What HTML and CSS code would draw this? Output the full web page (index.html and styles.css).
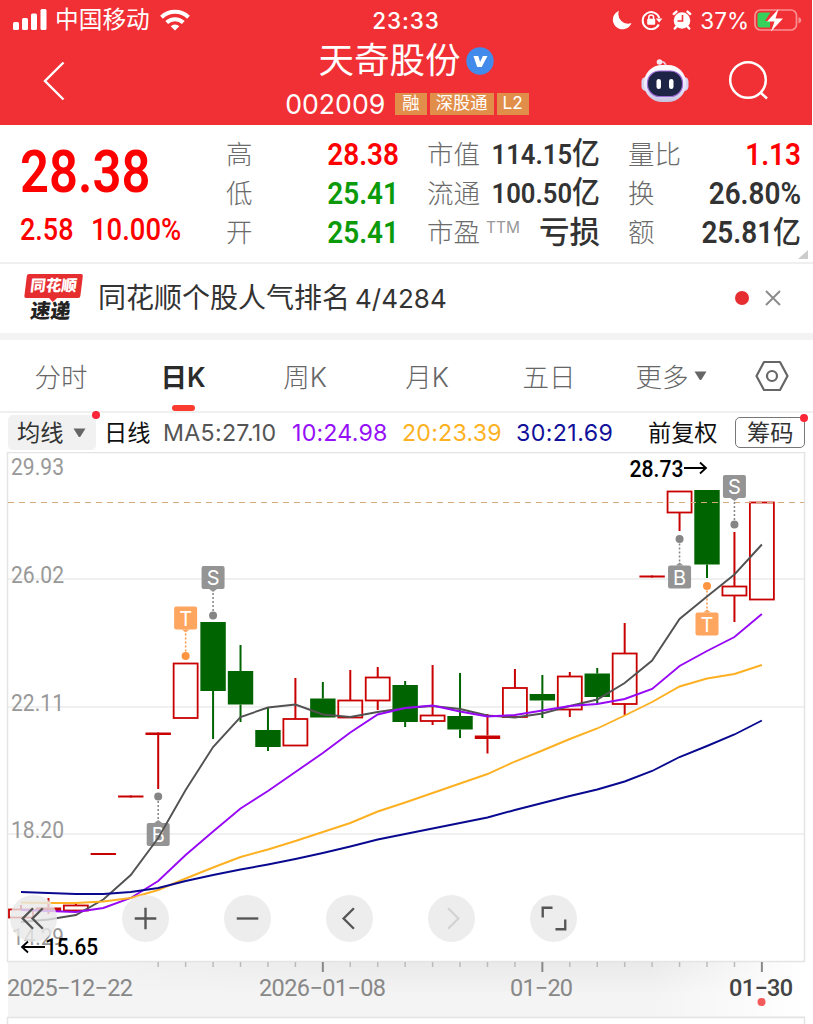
FILE: index.html
```html
<!DOCTYPE html>
<html lang="zh-CN">
  <head>
    <meta charset="UTF-8">
    <meta name="viewport" content="width=device-width, initial-scale=1.0">
    <link rel="stylesheet" href="styles.css">
    <title>天奇股份 002009</title>
  </head>
  <body>
    <header class="header">
      <div class="status">
        <div class="status-left">
          <svg width="34" height="22" viewBox="0 0 34 22" fill="#fff">
            <rect x="0" y="13" width="6" height="8" rx="1.5"/>
            <rect x="9" y="9" width="6" height="12" rx="1.5"/>
            <rect x="18" y="4.500" width="6" height="16.500" rx="1.5"/>
            <rect x="27.500" y="0" width="6" height="21" rx="1.5"/>
          </svg>
          <span class="carrier">中国移动</span>
          <svg width="30" height="22" viewBox="0 0 30 22" fill="none" stroke="#fff" stroke-width="4">
            <path d="M1.500 8.300a19.500 19.500 0 0 1 27 0"/>
            <path d="M6.700 13.500a12 12 0 0 1 16.600 0"/>
            <path d="M15 21.500l-4.300-4.300a6.300 6.300 0 0 1 8.600 0z" fill="#fff" stroke="none"/>
          </svg>
        </div>
        <span class="time">23:33</span>
        <div class="status-right">
          <svg class="moon" width="20" height="20" viewBox="0 0 20 20"><path d="M7 .8A9.600 9.600 0 1 0 19.500 13 9.600 9.600 0 0 1 7 .8z" fill="#fff"/></svg>
          <svg class="lock" width="22" height="20" viewBox="0 0 22 20">
            <path d="M17.800 14.500A8.500 8.500 0 1 1 18.300 8" fill="none" stroke="#fff" stroke-width="2"/>
            <path d="M14.800 8.500h6.600l-3.300 4z" fill="#fff"/>
            <rect x="6.200" y="8.800" width="8" height="6" rx="1" fill="#fff"/>
            <path d="M7.800 9V7.300a2.400 2.400 0 0 1 4.800 0V9" fill="none" stroke="#fff" stroke-width="1.500"/>
          </svg>
          <svg class="alarm" width="20" height="20" viewBox="0 0 20 20">
            <circle cx="10" cy="10.500" r="8.300" fill="#fff"/>
            <path d="M1.800 4L4.500 1.600M18.200 4l-2.700-2.400M4.500 16.500L2.800 18.500M15.500 16.500l1.700 2" stroke="#fff" stroke-width="2.400" stroke-linecap="round"/>
            <path d="M10.500 5v6H5.500" fill="none" stroke="#f03035" stroke-width="1.600"/>
          </svg>
          <span class="percent">37%</span>
          <svg class="battery" width="48" height="24" viewBox="0 0 48 24">
            <rect x="1" y="2" width="41.500" height="20" rx="5.500" fill="none" stroke="#f98f91" stroke-width="1.700"/>
            <path d="M44.500 9v6.500q2.800-1 2.800-3.200T44.500 9z" fill="#f98f91"/>
            <path d="M6 4.500h10.500L11 13h5v6.500H6a2.500 2.500 0 0 1-2.500-2.500V7A2.500 2.500 0 0 1 6 4.500z" fill="#35d15a"/>
            <path d="M24.500 1L13 13.500h7.500L17 23.500 29 10.500h-7.500z" fill="#fff"/>
          </svg>
        </div>
      </div>
      <div class="nav">
        <svg class="back" width="24" height="42" viewBox="0 0 24 42"><path d="M21.500 2.500L3 21l18.500 18.500" fill="none" stroke="#fff" stroke-width="2.400"/></svg>
        <div class="stock">
          <div class="name"><span>天奇股份</span>
            <svg width="28" height="28" viewBox="0 0 28 28">
              <circle cx="14" cy="14" r="13.700" fill="#438bea"/>
              <path d="M7.500 9h4.800l1.800 6 2.800-6h4.600l-5.800 11h-4.500z" fill="#fff"/>
            </svg>
          </div>
          <div class="code">002009<i class="tag">融</i><i class="tag">深股通</i><i class="tag">L2</i></div>
        </div>
        <div class="nav-icons">
          <svg width="48" height="46" viewBox="0 0 48 46">
            <defs>
              <linearGradient id="head" x1="0" y1="0" x2="0" y2="1">
                <stop offset="0" stop-color="#fff"/>
                <stop offset=".65" stop-color="#e9e4fa"/>
                <stop offset="1" stop-color="#c5c2e0"/>
              </linearGradient>
            </defs>
            <path d="M18.500 4q6-1.500 6.500 5" fill="none" stroke="#f2cede" stroke-width="1.600"/>
            <circle cx="18.500" cy="4" r="2.800" fill="#f5e9f4"/>
            <rect x=".5" y="19" width="9" height="14" rx="4.500" fill="#d6d4f1"/>
            <rect x="38.500" y="19" width="9" height="14" rx="4.500" fill="#d6d4f1"/>
            <rect x="3" y="7" width="42" height="37" rx="18" fill="url(#head)"/>
            <rect x="6.500" y="13" width="35" height="25.500" rx="12" fill="#1d2446" stroke="#9d6bd5" stroke-width="1.200"/>
            <rect x="15.500" y="21" width="4.500" height="10" rx="2.200" fill="#fff"/>
            <rect x="28" y="21" width="4.500" height="10" rx="2.200" fill="#fff"/>
          </svg>
          <svg width="42" height="42" viewBox="0 0 42 42" fill="none" stroke="#fff" stroke-width="2.500">
            <circle cx="20" cy="20" r="17.800"/>
            <path d="M32.500 32.500l6.500 6"/>
          </svg>
        </div>
      </div>
    </header>

    <section class="quote">
      <div class="price-box red">
        <div class="price"><b class="din">28.38</b></div>
        <div class="change"><span class="din">2.58</span><span class="din">10.00%</span></div>
      </div>
      <dl class="col">
        <dt>高</dt><dd class="din red">28.38</dd>
        <dt>低</dt><dd class="din green">25.41</dd>
        <dt>开</dt><dd class="din green">25.41</dd>
      </dl>
      <dl class="col">
        <dt>市值</dt><dd class="din small">114.15<u>亿</u></dd>
        <dt>流通</dt><dd class="din small">100.50<u>亿</u></dd>
        <dt>市盈<sup>TTM</sup></dt><dd class="cn">亏损</dd>
      </dl>
      <dl class="col">
        <dt>量比</dt><dd class="din red">1.13</dd>
        <dt>换</dt><dd class="din">26.80%</dd>
        <dt>额</dt><dd class="din">25.81<u>亿</u></dd>
      </dl>
      <span class="corner"></span>
    </section>

    <section class="notice">
      <div class="logo">
        <span class="logo-top">同花顺</span>
        <span class="logo-bottom">速递</span>
      </div>
      <p>同花顺个股人气排名<span>4/4284</span></p>
      <span class="dot"></span>
      <svg width="16" height="16" viewBox="0 0 16 16"><path d="M1 1l14 14M15 1L1 15" stroke="#8c8c8c" stroke-width="2"/></svg>
    </section>

    <nav class="tabs">
      <a>分时</a>
      <a class="active">日K</a>
      <a>周K</a>
      <a>月K</a>
      <a>五日</a>
      <a>更多<svg width="13" height="10" viewBox="0 0 13 10"><path d="M.5.500h12L7.500 8.500q-1 1-2 0z" fill="#666"/></svg></a>
      <svg class="setting" width="34" height="32" viewBox="0 0 34 32" fill="none" stroke="#666" stroke-width="2.200" stroke-linejoin="round">
        <path d="M9 2h16l7.500 14L25 30H9L1.500 16z"/>
        <circle cx="17" cy="16" r="5"/>
      </svg>
    </nav>

    <div class="legend">
      <span class="select"><span class="cjk">均线</span><svg width="13" height="10" viewBox="0 0 13 10"><path d="M.5.500h12L7.500 8.500q-1 1-2 0z" fill="#666"/></svg></span>
      <span class="black cjk">日线</span>
      <span class="ma5">MA5:27.10</span>
      <span class="ma10">10:24.98</span>
      <span class="ma20">20:23.39</span>
      <span class="ma30">30:21.69</span>
      <span class="black cjk">前复权</span>
      <span class="chip"><span class="cjk">筹码</span></span>
    </div>

    <div class="chart-box">
      <svg id="chart" width="813" height="572" viewBox="0 452 813 572">
        <defs>
          <linearGradient id="axis" x1="0" y1="0" x2="0" y2="1">
            <stop offset="0" stop-color="#e9e9e9"/>
            <stop offset=".6" stop-color="#f4f4f4"/>
          </linearGradient>
          <linearGradient id="side" x1="0" y1="0" x2="1" y2="0">
            <stop offset="0" stop-color="#f4f4f4"/>
            <stop offset="1" stop-color="#f4f4f4" stop-opacity="0"/>
          </linearGradient>
          <linearGradient id="fade" x1="0" y1="0" x2="1" y2="0">
            <stop offset="0" stop-color="#fff" stop-opacity="0"/>
            <stop offset="1" stop-color="#fff"/>
          </linearGradient>
        </defs>
        <rect x="8" y="961" width="797" height="56" fill="url(#axis)"/>
        <rect x="8" y="961" width="380" height="56" fill="url(#side)"/>
        <rect x="650" y="962" width="155" height="54" fill="url(#fade)"/>
        <rect x="7.500" y="452.500" width="797" height="509" class="frame"/>
        <path d="M7.500 1024v-6.500h797v6.500" class="frame"/>
        <path d="M8 579h796M8 707h796M8 834h796" class="grid"/>
        <g lengthAdjust="spacingAndGlyphs">
          <text x="11" y="475" textLength="53" lengthAdjust="spacingAndGlyphs" class="scale">29.93</text>
          <text x="11" y="583" textLength="53" lengthAdjust="spacingAndGlyphs" class="scale">26.02</text>
          <text x="11" y="711" textLength="53" lengthAdjust="spacingAndGlyphs" class="scale">22.11</text>
          <text x="11" y="838" textLength="53" lengthAdjust="spacingAndGlyphs" class="scale">18.20</text>
          <text x="12" y="945" textLength="52" lengthAdjust="spacingAndGlyphs" class="scale">14.29</text>
        </g>
        <g id="candles"></g>
        <path d="M8 502.500h796" class="last"/>
        <g id="marks"></g>
        <g id="lines"></g>
        <text x="629.500" y="477" textLength="54" lengthAdjust="spacingAndGlyphs" class="peak">28.73</text>
        <path d="M684 468h22M700 462.500l6 5.500-6 5.500" class="arrow"/>
        <g id="ticks"></g>
        <text x="7" y="996" textLength="126" class="date">2025−12−22</text>
        <text x="259" y="996" textLength="127" class="date">2026−01−08</text>
        <text x="510" y="996" textLength="63" class="date">01−20</text>
        <text x="729" y="996" textLength="64" class="date now">01−30</text>
        <circle cx="761.500" cy="1002" r="4" fill="#f35b5b"/>
      </svg>
      <div class="tools">
        <button><svg viewBox="0 0 48 48"><path d="M33.500 13.500L23 24l10.500 10.500M23.500 13.500L13 24l10.500 10.500"/></svg></button>
        <button><svg viewBox="0 0 48 48"><path d="M24 13v22M13 24h22"/></svg></button>
        <button><svg viewBox="0 0 48 48"><path d="M13 24h22"/></svg></button>
        <button><svg viewBox="0 0 48 48"><path d="M28.500 13.500L18 24l10.500 10.500"/></svg></button>
        <button class="disabled"><svg viewBox="0 0 48 48"><path d="M20.500 13.500L31 24 20.500 34.500"/></svg></button>
        <button><svg viewBox="0 0 48 48"><path d="M13 23V13h10M36 25v10H26"/></svg></button>
      </div>
      <svg class="low" width="94" height="30" viewBox="20 932 94 30">
        <path d="M45 947H22.500M28 941.500l-6 5.500 6 5.500" class="arrow"/>
        <text x="45" y="955" textLength="53" lengthAdjust="spacingAndGlyphs" class="peak">15.65</text>
      </svg>
    </div>
    <script src="chart.js"></script>
  </body>
</html>
```
FILE: styles.css
```css
* {
  box-sizing: border-box;
}

body {
  margin: 0;
  width: 813px;
  height: 1024px;
  overflow: hidden;
  background: #fff;
  font-family: Inter, "Noto Sans CJK SC", sans-serif;
  color: #333;
}

svg {
  display: block;
  flex: none;
}

.red {
  color: #fe0000 !important;
}

.green {
  color: #0a9a0a !important;
}

/* header */

.header {
  width: 812px;
  height: 125px;
  background: #f03035;
  color: #fff;
}

.status {
  display: grid;
  grid-template-columns: 1fr 80px 1fr;
  align-items: center;
  height: 40px;
}

.status-left {
  display: flex;
  align-items: center;
  padding-left: 13px;
}

.carrier {
  margin: 0 10px 0 8px;
  font-size: 23.7px;
  line-height: 40px;
}

.time {
  text-align: center;
  font-size: 22.5px;
  font-weight: 500;
  letter-spacing: 0.9px;
}

.status-right {
  display: flex;
  align-items: center;
  justify-content: flex-end;
  padding-right: 10px;
}

.lock {
  margin: 0 9px;
}

.percent {
  margin: 0 5px 0 8px;
  font-size: 22.5px;
}

.nav {
  display: grid;
  grid-template-columns: 1fr 320px 1fr;
  height: 85px;
}

.back {
  margin: 20px 0 0 42px;
}

.stock {
  text-align: center;
}

.name {
  display: flex;
  align-items: center;
  justify-content: center;
  gap: 5px;
  height: 42px;
  font-size: 35.5px;
}

.name span {
  margin-top: -7px;
}

.code {
  display: flex;
  align-items: center;
  justify-content: center;
  gap: 3px;
  height: 44px;
  padding-left: 2px;
  font-size: 26.7px;
}

.tag {
  height: 22px;
  padding: 0 6px;
  background: #e28e4b;
  font-size: 17.3px;
  font-style: normal;
  line-height: 20px;
}

.tag:first-of-type {
  margin-left: 7px;
  padding: 0 7px;
}

.nav-icons {
  display: flex;
  gap: 39px;
  padding: 18px 0 0 75px;
}

.nav-icons svg + svg {
  margin-top: 2px;
}

/* quote */

.quote {
  position: relative;
  display: grid;
  grid-template-columns: 178px 173px 173px 173px;
  column-gap: 28px;
  height: 139px;
  padding: 10px 0 0 20px;
  border-bottom: 2px solid #efefef;
}

.din {
  font-family: Roboto, "Noto Sans CJK SC", sans-serif;
  font-size: 31px;
  font-weight: 500;
  transform: scaleX(0.9);
  transform-origin: right center;
  white-space: nowrap;
}

.price {
  height: 72px;
  line-height: 74px;
}

.price .din {
  display: inline-block;
  font-size: 59px;
  font-weight: 600;
  transform: scaleX(0.86);
  transform-origin: left center;
}

.change {
  display: flex;
  line-height: 45px;
}

.change .din {
  transform: scaleX(0.87);
  transform-origin: left center;
}

.change .din + .din {
  margin-left: 10px;
  transform: scaleX(0.885);
}

.col {
  display: grid;
  grid-template-columns: 52px 1fr;
  grid-auto-rows: 39px;
  margin: 0;
  line-height: 39px;
}

.col dt {
  margin-top: -2px;
  color: #6b6b6b;
  font-size: 26.5px;
  font-family: "Noto Sans CJK SC", sans-serif;
  font-weight: 300;
  white-space: nowrap;
}

.col dd {
  margin: 0;
  font-weight: 600;
  text-align: right;
}

.col .small {
  font-size: 28.5px;
}

.col u {
  font-size: 31px;
  font-weight: 500;
  line-height: 0;
  text-decoration: none;
}

.col .cn {
  margin-top: -2px;
  font-family: "Noto Sans CJK SC", sans-serif;
  font-size: 30.5px;
  font-weight: 500;
}

.col sup {
  margin-left: 6px;
  font-family: Inter, sans-serif;
  font-size: 15.5px;
  font-weight: 400;
  line-height: 0;
  vertical-align: 9px;
  color: #999;
}

.corner {
  position: absolute;
  right: 5px;
  bottom: 3px;
  border-left: 10px solid transparent;
  border-bottom: 9px solid #ccc;
}

/* notice */

.notice {
  display: flex;
  align-items: center;
  height: 76px;
  padding: 0 32px 0 24px;
  border-bottom: 7px solid #f3f3f3;
}

.logo {
  width: 56px;
  height: 50px;
  margin-right: 2px;
  font-weight: 900;
  text-align: center;
  transform: skewX(-7deg);
}

.logo span {
  display: block;
}

.logo-top {
  position: relative;
  height: 24px;
  border-radius: 2px;
  background: #e62d30;
  color: #fff;
  font-size: 15.5px;
  line-height: 23px;
}

.logo-top::after {
  content: "";
  position: absolute;
  left: 25px;
  top: 24px;
  border: 4px solid transparent;
  border-top-color: #e62d30;
}

.logo-bottom {
  font-size: 20px;
  line-height: 27px;
  color: #222;
}

.notice p {
  flex: 1;
  margin: -5px 0 0 16px;
  font-size: 28px;
}

.notice p span {
  margin-left: 5px;
  font-size: 26px;
}

.dot {
  width: 14px;
  height: 14px;
  margin-top: -2px;
  margin-right: 16px;
  border-radius: 50%;
  background: #e62d30;
}

.dot + svg {
  margin-top: -2px;
}

/* tabs */

.tabs {
  display: flex;
  align-items: center;
  height: 73px;
  border-bottom: 2px solid #f0f0f0;
}

.tabs a {
  position: relative;
  display: flex;
  align-items: center;
  justify-content: center;
  gap: 5px;
  width: 122px;
  height: 71px;
  color: #666;
  font-size: 26.5px;
  font-weight: 300;
}

.tabs .active {
  color: #2b2b2b;
  font-weight: 600;
}

.tabs .active::after {
  content: "";
  position: absolute;
  left: 50px;
  bottom: 0;
  width: 23px;
  height: 6px;
  border-radius: 3px;
  background: #fb3a30;
}

.setting {
  margin-left: 23px;
}

/* legend */

.legend {
  display: grid;
  grid-template-columns: 88px 60px 129px 109px 114px 140px 87px 70px;
  align-items: center;
  height: 39px;
  padding-left: 8px;
  font-size: 23.2px;
  white-space: nowrap;
}

.cjk {
  margin-top: -4px;
}

.select,
.chip {
  position: relative;
  display: flex;
  align-items: center;
  gap: 10px;
  height: 35px;
  padding-left: 9px;
  border-radius: 5px;
  background: #f1f1f1;
}

.select::after,
.chip::after {
  content: "";
  position: absolute;
  right: -4px;
  top: -4px;
  width: 8px;
  height: 8px;
  border-radius: 50%;
  background: #fd2638;
}

.chip {
  height: 31px;
  padding-left: 11px;
  border: 1px solid #777;
  background: #fff;
}

.black {
  color: #111;
}

.select + .black {
  padding-left: 8px;
}

.ma5 { color: #555; padding-left: 7px; letter-spacing: 0.3px; }
.ma10 { color: #9510f7; padding-left: 7px; letter-spacing: 0.2px; }
.ma20 { color: #fdb224; padding-left: 8px; letter-spacing: 0.2px; }
.ma30 { color: #11119a; padding-left: 8px; letter-spacing: 0.4px; }

/* chart */

.chart-box {
  position: relative;
  height: 572px;
}

.frame {
  fill: none;
  stroke: #e4e4e4;
  stroke-width: 1.5;
}

.grid {
  stroke: #ebebeb;
  stroke-width: 1.5;
}

.last {
  stroke: #d6ab7c;
  stroke-width: 1.2;
  stroke-dasharray: 6 5;
}

.scale,
.peak,
.date {
  font-family: Roboto, sans-serif;
  font-size: 23.5px;
  fill: #999;
}

.peak {
  font-weight: 500;
  fill: #000;
}

.date {
  fill: #888;
}

.now {
  fill: #444;
  font-weight: 500;
}

.arrow {
  fill: none;
  stroke: #000;
  stroke-width: 1.8;
}

.mark-text {
  font-family: Inter, sans-serif;
  font-size: 20px;
  text-anchor: middle;
  fill: #fff;
}

.tools {
  position: absolute;
  left: 10px;
  top: 443px;
  display: flex;
  gap: 55px;
}

.tools button {
  width: 47px;
  height: 47px;
  padding: 0;
  border: none;
  border-radius: 50%;
  background: rgba(232, 232, 232, 0.8);
}

.tools button:first-child {
  margin-right: 10px;
}

.tools path {
  fill: none;
  stroke: #555;
  stroke-width: 2.4;
}

.tools .disabled path {
  stroke: #d3d3d3;
}

.low {
  position: absolute;
  left: 20px;
  top: 480px;
}
```
FILE: chart.js
```js
const STEP = 27.44;
const START = 21;
const RED = "#c80000";
const GREEN = "#006400";

// type, body top, body bottom, high, low
const candles = [
  ["up", 909.5, 917.5, 905, 917.5],
  ["flat", 907.5, 911, 898, 914],
  ["up", 905.5, 910.5, 904, 910.5],
  ["flat", 853, 855, 854, 854],
  ["flat", 795.5, 797.5, 796, 796],
  ["flat", 732.5, 735, 733, 789],
  ["up", 663.5, 718, 663.5, 718],
  ["down", 622, 691, 622, 739],
  ["down", 671, 704.5, 645, 722],
  ["down", 730, 747, 707, 751],
  ["up", 719, 745.5, 678, 745.5],
  ["down", 698.5, 717.5, 682, 717.5],
  ["up", 700.5, 717.5, 670, 717.5],
  ["up", 677.5, 700.5, 667, 710],
  ["down", 685, 722, 681, 727],
  ["up", 715.5, 721, 665, 725],
  ["down", 716, 729.5, 673, 738],
  ["flat", 735.5, 739, 714, 753.5],
  ["up", 688, 717, 669, 717],
  ["down", 694, 700.5, 675, 718],
  ["up", 676.5, 709.5, 672, 717],
  ["down", 673.5, 697, 668, 704],
  ["up", 653.5, 704, 623, 715],
  ["flat", 575.5, 577.5, 576, 576],
  ["up", 491.5, 512.5, 491.5, 531],
  ["down", 490, 564.5, 490, 578],
  ["up", 586.5, 595.5, 532, 622],
  ["up", 502.5, 599.5, 502.5, 599.5]
];

const lines = [
  ["#525252", [922, 919.5, 915, 899.5, 875, 838, 790, 747, 717, 707.5, 704.5, 714.5, 717, 712, 708, 706, 709, 715.5, 717.5, 713.5, 706, 699.5, 683, 660.5, 619, 596.5, 574.5, 544.5]],
  ["#9708f5", [910, 911, 912, 908, 898, 881, 855, 831.5, 808.5, 791, 772, 753, 732.5, 714.5, 708, 705.5, 711.5, 716.5, 715, 710.5, 706, 704, 699, 689, 666, 651, 637, 614]],
  ["#fdb022", [902.5, 903, 903, 901.5, 898, 890, 878.5, 867.5, 857, 849.5, 841, 832, 823, 811.5, 802.5, 793, 783.5, 774, 761.5, 750.5, 739, 728.5, 715.5, 702, 686.5, 678.5, 674, 665]],
  ["#090990", [892, 893, 894, 894, 892, 888, 881, 875, 869.5, 864.5, 859, 853, 846.5, 839.5, 834, 828.5, 823, 817.5, 810, 803, 796, 789.5, 781.5, 771, 757, 746, 734.5, 720.5]]
];

// letter, candle index, label center, dot center
const marks = [
  ["B", 5, 834.5, 796.5],
  ["T", 6, 618, 656],
  ["S", 7, 577.5, 615.5],
  ["B", 24, 577, 539],
  ["T", 25, 624, 586],
  ["S", 26, 486.5, 524.5]
];

const x = i => START + i * STEP;

document.querySelector("#candles").innerHTML = candles.map(([type, top, bottom, high, low], i) => {
  const color = type === "down" ? GREEN : RED;
  const fill = type === "up" ? "none" : color;
  const half = type === "up" ? 12 : 12.7;
  const stroke = type === "up" ? 1.8 : 0;
  return `<path d="M${x(i)} ${high}V${top}M${x(i)} ${bottom}V${low}" stroke="${color}" stroke-width="2"/>
    <rect x="${x(i) - half}" y="${top}" width="${half * 2}" height="${bottom - top}" fill="${fill}" stroke="${color}" stroke-width="${stroke}"/>`;
}).join("");

document.querySelector("#lines").innerHTML = lines.map(([color, values]) => {
  const points = values.map((y, i) => x(i) + "," + y).join(" ");
  return `<polyline points="${points}" fill="none" stroke="${color}" stroke-width="1.9"/>`;
}).join("");

document.querySelector("#marks").innerHTML = marks.map(([letter, i, y, dot]) => {
  const box = letter === "T" ? "#fea560" : "#949494";
  const color = letter === "T" ? "#ff9540" : "#858585";
  const dir = dot > y ? 1 : -1;
  const edge = y + dir * 11.5;
  return `<path d="M${x(i)} ${edge}V${dot}" stroke="${color}" stroke-width="1.5" stroke-dasharray="2 2"/>
    <circle cx="${x(i)}" cy="${dot}" r="4" fill="${color}"/>
    <path d="M${x(i) - 4} ${edge}h8l-4 ${dir * 3}z" fill="${box}"/>
    <rect x="${x(i) - 11.5}" y="${y - 11.5}" width="23" height="23" rx="2" fill="${box}"/>
    <text x="${x(i)}" y="${y + 7.5}" class="mark-text">${letter}</text>`;
}).join("");

let ticks = "";
for (let i = 5; i < candles.length; i++) {
  const major = i === 11 || i === 19 || i === 27;
  ticks += `<path d="M${x(i)} 962v${major ? 10 : 5}" stroke="${major ? "#888" : "#bbb"}" stroke-width="${major ? 2 : 1.5}"/>`;
}
document.querySelector("#ticks").innerHTML = ticks;
```
